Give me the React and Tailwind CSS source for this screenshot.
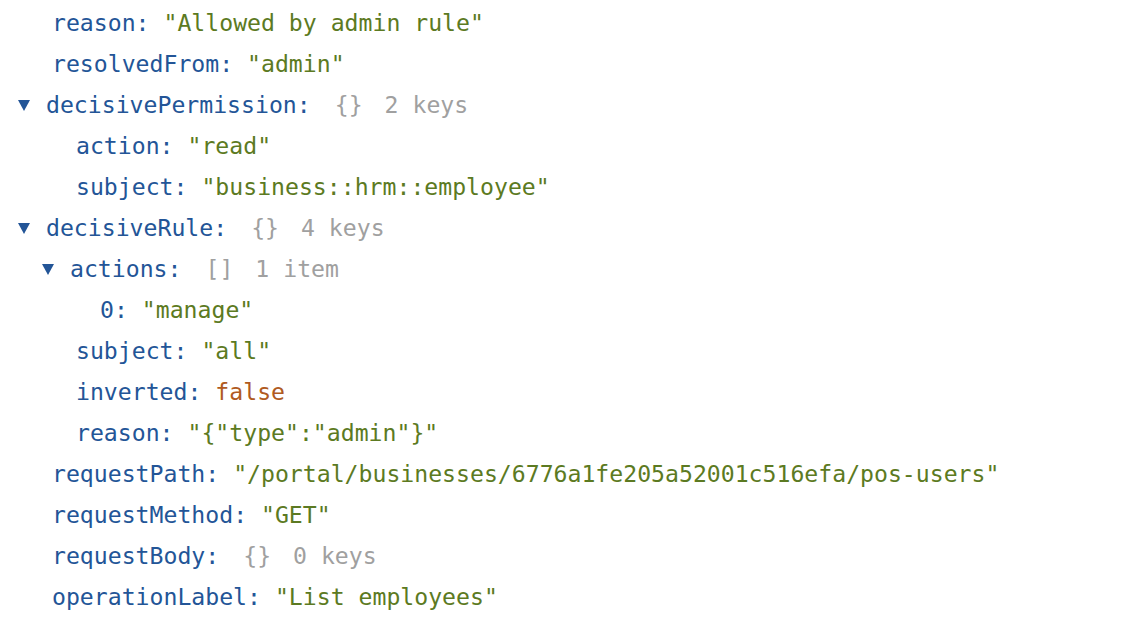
const rows = [
  { d: 0, k: 'reason', v: '"Allowed by admin rule"', t: 'str' },
  { d: 0, k: 'resolvedFrom', v: '"admin"', t: 'str' },
  { d: 0, k: 'decisivePermission', open: true, brace: '{}', count: '2 keys' },
  { d: 1, k: 'action', v: '"read"', t: 'str' },
  { d: 1, k: 'subject', v: '"business::hrm::employee"', t: 'str' },
  { d: 0, k: 'decisiveRule', open: true, brace: '{}', count: '4 keys' },
  { d: 1, k: 'actions', open: true, brace: '[]', count: '1 item' },
  { d: 2, k: '0', v: '"manage"', t: 'str' },
  { d: 1, k: 'subject', v: '"all"', t: 'str' },
  { d: 1, k: 'inverted', v: 'false', t: 'bool' },
  { d: 1, k: 'reason', v: '"{"type":"admin"}"', t: 'str' },
  { d: 0, k: 'requestPath', v: '"/portal/businesses/6776a1fe205a52001c516efa/pos-users"', t: 'str' },
  { d: 0, k: 'requestMethod', v: '"GET"', t: 'str' },
  { d: 0, k: 'requestBody', brace: '{}', count: '0 keys' },
  { d: 0, k: 'operationLabel', v: '"List employees"', t: 'str' },
];

const indent = ['pl-[52px]', 'pl-[76px]', 'pl-[100px]'];
const indentOpen = ['pl-[18px]', 'pl-[42px]', 'pl-[66px]'];

function Caret() {
  return (
    <svg width="12" height="11" viewBox="0 0 12 11" className="mr-[16px] shrink-0">
      <path d="M0 0 H12 L6 11 Z" fill="#235597" />
    </svg>
  );
}

function Row({ r }) {
  return (
    <div className={`flex items-center h-[41px] whitespace-pre ${r.open ? indentOpen[r.d] : indent[r.d]}`}>
      {r.open && <Caret />}
      <span className="text-[#235597]">{r.k}:</span>
      {r.brace ? (
        <span className="text-[#a0a0a0] ml-[24px]">
          {r.brace}
          <span className="ml-[22px]">{r.count}</span>
        </span>
      ) : (
        <span className={r.t === 'bool' ? 'text-[#b05a21]' : 'text-[#5c7a22]'}> {r.v}</span>
      )}
    </div>
  );
}

export default function App() {
  return (
    <div
      className="w-[1132px] h-[626px] bg-white pt-[3px] text-[23.15px] overflow-hidden"
      style={{ fontFamily: '"DejaVu Sans Mono", "Liberation Mono", monospace' }}
    >
      {rows.map((r, i) => (
        <Row key={i} r={r} />
      ))}
    </div>
  );
}
